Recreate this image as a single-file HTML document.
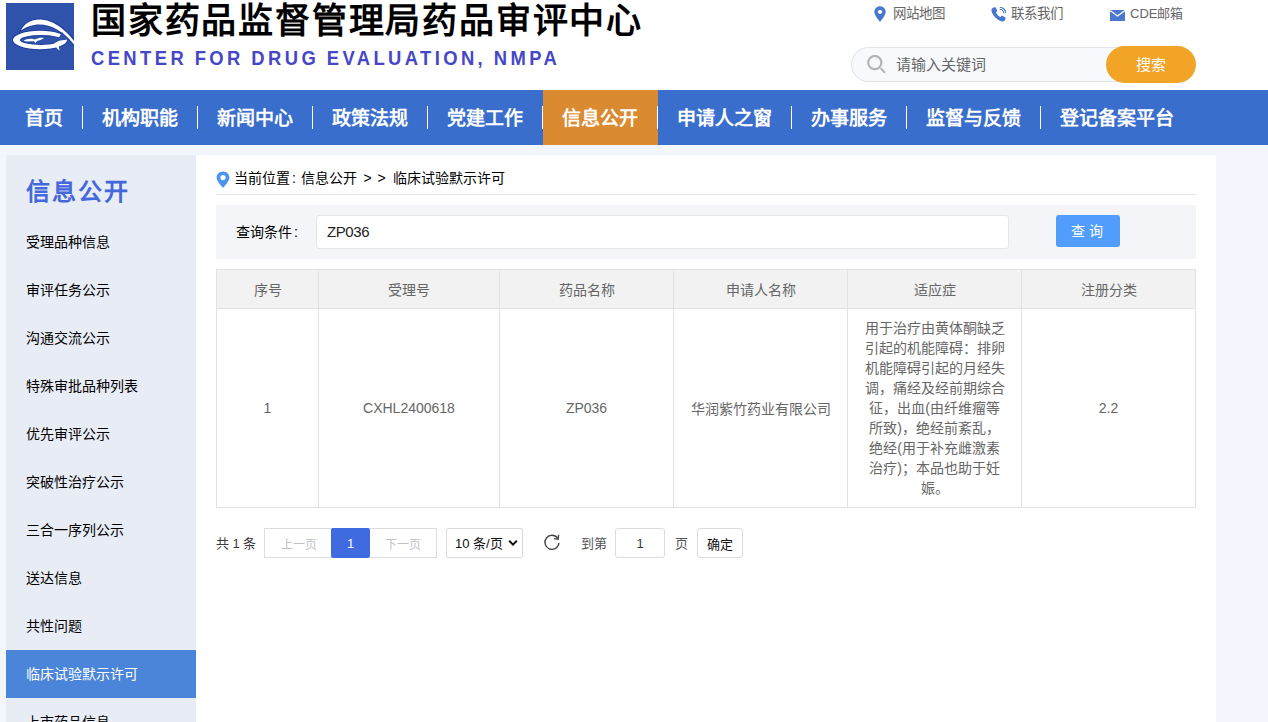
<!DOCTYPE html>
<html lang="zh-CN"><head><meta charset="utf-8">
<style>
*{margin:0;padding:0;box-sizing:border-box}
html,body{width:1268px;height:722px;overflow:hidden}
body{font-family:"Liberation Sans",sans-serif;background:#f3f6fd;position:relative;color:#333}
.abs{position:absolute}
#header{position:absolute;left:0;top:0;width:1268px;height:90px;background:#fff}
#logo{left:6px;top:3px;width:68px;height:67px;background:#2d4fa8}
#title{left:91px;top:0px;font-size:35px;font-weight:bold;color:#000;white-space:nowrap;line-height:42px;letter-spacing:1.8px}
#entitle{left:91px;top:45px;font-size:20px;font-weight:bold;color:#4646c8;letter-spacing:3.7px;word-spacing:-1px;transform:scaleX(0.92);transform-origin:0 0;white-space:nowrap;line-height:26px}
.toplink{top:5px;font-size:13px;color:#666;white-space:nowrap;line-height:18px}
#search{left:851px;top:47px;width:300px;height:35px;border:1px solid #e2e4ea;border-right:none;border-radius:18px 0 0 18px;background:#f8f9fd}
#search .ph{position:absolute;left:44px;top:7px;font-size:15px;color:#666;line-height:20px}
#sbtn{left:1106px;top:46px;width:90px;height:37px;border-radius:19px;background:#f2a426;color:#fff;font-size:15px;text-align:center;line-height:38px}
#nav{left:0;top:90px;width:1268px;height:55px;background:#3a6ecd}
.ni{position:absolute;top:0;height:55px;line-height:57px;font-size:19px;font-weight:bold;color:#fff;white-space:nowrap}
.sep{position:absolute;top:16px;width:1px;height:23px;background:#fff}
#active{left:543px;top:0;width:115px;height:55px;background:#da8a30}
#side{left:6px;top:155px;width:190px;height:567px;background:#e8ecf5}
#side .t{position:absolute;left:20px;top:21px;font-size:24px;font-weight:bold;color:#4468dc;line-height:32px;letter-spacing:2px}
.mi{position:absolute;left:0;width:190px;height:48px;line-height:48px;padding-left:20px;font-size:14px;color:#000;white-space:nowrap}
.mi.on{background:#4a85d9;color:#fff}
#main{left:196px;top:155px;width:1020px;height:567px;background:#fff}

#crumb,.crumb{left:20px;top:14px;font-size:14px;color:#000;white-space:nowrap;line-height:18px}
#pin{left:20px;top:16px}
#divl{left:20px;top:39px;width:980px;height:1px;background:#e6e6e6}
#qbar{left:20px;top:50px;width:980px;height:54px;background:#f3f5f9}
#qlabel{left:20px;top:17px;font-size:14px;color:#000;line-height:20px}
#qinput{left:100px;top:10px;width:693px;height:34px;background:#fff;border:1px solid #e3e6eb;border-radius:3px}
#qinput span{position:absolute;left:10px;top:6px;font-size:15px;color:#222;line-height:20px;letter-spacing:-0.4px}
#qbtn{left:840px;top:10px;width:64px;height:32px;background:#509dfb;border-radius:3px;color:#fff;font-size:14px;text-align:center;line-height:32px;letter-spacing:4px;text-indent:2px}
#tbl{position:absolute;left:20px;top:114px;border-collapse:collapse;font-size:14px;color:#666}
#tbl td,#tbl th{border:1px solid #e2e2e2;text-align:center;font-weight:normal}
#tbl th{background:#f2f2f2;height:39px;color:#666}
#tbl td{height:199px}
.pg{position:absolute;top:373px;height:30px;font-size:13px;line-height:31px;white-space:nowrap}
</style></head><body>
<div id="header">
  <svg id="logo" class="abs" width="68" height="67" viewBox="0 0 68 67" style="overflow:visible">
  <defs><clipPath id="lc"><rect width="68" height="67"/></clipPath></defs>
  <rect width="68" height="67" fill="#2f52aa"/>
  <g clip-path="url(#lc)" fill="#1d3c9c" stroke="#1d3c9c" stroke-width="2.2" opacity="0.75">
    <path d="M15,27.5 C22,12 50,9 73,45 L70.5,44.5 C50,17 28,18 15,27.5 Z"/>
    <path fill-rule="evenodd" d="M34,27.8 A27,9.2 0 1 0 34,46.2 A27,9.2 0 1 0 34,27.8 Z M35,32.1 A21,4.9 0 1 1 35,41.9 A21,4.9 0 1 1 35,32.1 Z"/>
  </g>
  <path d="M15,27.5 C22,12 50,9 73,45 L70.5,44.5 C50,17 28,18 15,27.5 Z" fill="#fff"/>
  <path d="M69,40 L76,47 L73,45 Z" fill="#dfe6f5"/>
  <path fill-rule="evenodd" d="M34,27.8 A27,9.2 0 1 0 34,46.2 A27,9.2 0 1 0 34,27.8 Z M35,32.1 A21,4.9 0 1 1 35,41.9 A21,4.9 0 1 1 35,32.1 Z" fill="#fff"/>
  <path d="M56,29 L62,36 L50,40 Z" fill="#2f52aa"/>
  <path d="M48,40.5 C52,37.5 57,36.5 61.5,37 C57,38.5 54,40.5 52.5,43 C53,44.5 53.5,46 53.5,47.5 C51,46 49.5,43.5 48,40.5 Z" fill="#fff"/>
  <path d="M17.5,38 C20,35.5 26,35 29,36.5 C32,35 35,34.3 38,35 C36,36.5 33,37.5 31,38 L29.5,40 L28,38.3 C24,38.3 20,38.8 17.5,38 Z" fill="#fff"/>
</svg>
  <div id="title" class="abs">国家药品监督管理局药品审评中心</div>
  <div id="entitle" class="abs">CENTER FOR DRUG EVALUATION, NMPA</div>
  <div class="abs toplink" style="left:893px;font-size:13.5px">网站地图</div>
  <div class="abs toplink" style="left:1011px;font-size:13.5px">联系我们</div>
  <div class="abs toplink" style="left:1130px">CDE邮箱</div>
  <div id="search" class="abs"><span class="ph">请输入关键词</span></div>
  <div id="sbtn" class="abs">搜索</div>
  <svg class="abs" style="left:874px;top:6px" width="12" height="16" viewBox="0 0 12 16"><path d="M6 0.3C2.8 0.3 0.3 2.8 0.3 5.9C0.3 9.4 6 15.8 6 15.8S11.7 9.4 11.7 5.9C11.7 2.8 9.2 0.3 6 0.3Z" fill="#4a78d0"/><circle cx="6" cy="5.8" r="2.1" fill="#fff"/></svg>
  <svg class="abs" style="left:991px;top:7px" width="15" height="15" viewBox="0 0 15 15"><path d="M2.6 0.6L4.6 0.3L6.4 3.9L4.9 5.3C5.6 7.2 7.4 9.2 9.5 10.1L10.9 8.6L14.6 10.4L14.3 12.6C13.8 14.2 12.4 14.8 10.9 14.5C6.2 13.3 1.6 8.7 0.5 4.1C0.2 2.5 0.9 1.1 2.6 0.6Z" fill="#4a78d0"/><path d="M8.6 2.2A4.2 4.2 0 0 1 12.8 6.4" stroke="#4a78d0" stroke-width="1.1" fill="none"/><path d="M8.8 0.2A6.2 6.2 0 0 1 14.8 6.2" stroke="#4a78d0" stroke-width="1.1" fill="none"/></svg>
  <svg class="abs" style="left:1110px;top:10px" width="15" height="11" viewBox="0 0 15 11"><rect x="0" y="0" width="15" height="11" fill="#4a78d0"/><path d="M0 0.5L7.5 6L15 0.5" stroke="#fff" stroke-width="1.3" fill="none"/></svg>
  <svg class="abs" style="left:866px;top:55px" width="21" height="20" viewBox="0 0 21 20"><circle cx="8.8" cy="7.6" r="6.6" stroke="#b3b3b3" stroke-width="2.2" fill="none"/><path d="M14.6 13.2L19 17.8" stroke="#b3b3b3" stroke-width="2"/></svg>

</div>
<div id="nav" class="abs">
  <div id="active" class="abs"></div>
  <div class="ni" style="left:25px">首页</div>
  <div class="sep" style="left:82px"></div>
  <div class="ni" style="left:102px">机构职能</div>
  <div class="sep" style="left:197px"></div>
  <div class="ni" style="left:217px">新闻中心</div>
  <div class="sep" style="left:312px"></div>
  <div class="ni" style="left:332px">政策法规</div>
  <div class="sep" style="left:427px"></div>
  <div class="ni" style="left:447px">党建工作</div>
  <div class="sep" style="left:542px"></div>
  <div class="ni" style="left:562px">信息公开</div>
  <div class="sep" style="left:657px"></div>
  <div class="ni" style="left:677px">申请人之窗</div>
  <div class="sep" style="left:791px"></div>
  <div class="ni" style="left:811px">办事服务</div>
  <div class="sep" style="left:906px"></div>
  <div class="ni" style="left:926px">监督与反馈</div>
  <div class="sep" style="left:1040px"></div>
  <div class="ni" style="left:1060px">登记备案平台</div>
</div>
<div id="side" class="abs">
  <div class="t">信息公开</div>
  <div class="mi" style="top:63px">受理品种信息</div>
  <div class="mi" style="top:111px">审评任务公示</div>
  <div class="mi" style="top:159px">沟通交流公示</div>
  <div class="mi" style="top:207px">特殊审批品种列表</div>
  <div class="mi" style="top:255px">优先审评公示</div>
  <div class="mi" style="top:303px">突破性治疗公示</div>
  <div class="mi" style="top:351px">三合一序列公示</div>
  <div class="mi" style="top:399px">送达信息</div>
  <div class="mi" style="top:447px">共性问题</div>
  <div class="mi on" style="top:495px">临床试验默示许可</div>
  <div class="mi" style="top:543px">上市药品信息</div>
</div>
<div id="main" class="abs">
  <svg id="pin" class="abs" width="14" height="17" viewBox="0 0 14 17"><path d="M7 0.5C3.4 0.5 0.6 3.3 0.6 6.8C0.6 10.5 7 16.8 7 16.8S13.4 10.5 13.4 6.8C13.4 3.3 10.6 0.5 7 0.5Z" fill="#4a94f0"/><circle cx="7" cy="6.6" r="2.6" fill="#fff"/></svg>
  <div class="abs crumb" style="left:38px">当前位置</div><div class="abs crumb" style="left:96px">:</div><div class="abs crumb" style="left:105px">信息公开</div><div class="abs crumb" style="left:167.5px">&gt;</div><div class="abs crumb" style="left:181.5px">&gt;</div><div class="abs crumb" style="left:197px">临床试验默示许可</div>
  <div id="divl" class="abs"></div>
  <div id="qbar" class="abs">
    <div id="qlabel" class="abs">查询条件<span style="margin-left:2px">:</span></div>
    <div id="qinput" class="abs"><span>ZP036</span></div>
    <div id="qbtn" class="abs">查询</div>
  </div>
  <table id="tbl">
    <tr><th style="width:102px">序号</th><th style="width:181px">受理号</th><th style="width:174px">药品名称</th><th style="width:174px">申请人名称</th><th style="width:174px">适应症</th><th style="width:174px">注册分类</th></tr>
    <tr><td>1</td><td>CXHL2400618</td><td>ZP036</td><td>华润紫竹药业有限公司</td><td style="line-height:20px;white-space:nowrap">用于治疗由黄体酮缺乏<br>引起的机能障碍：排卵<br>机能障碍引起的月经失<br>调，痛经及经前期综合<br>征，出血(由纤维瘤等<br>所致)，绝经前紊乱，<br>绝经(用于补充雌激素<br>治疗)；本品也助于妊<br>娠。</td><td>2.2</td></tr>
  </table>
  <div class="pg" style="left:20px;color:#3a3a3a">共 1 条</div>
  <div class="pg" style="left:68px;width:68px;border:1px solid #dcdcdc;border-right:none;color:#c0c4cc;text-align:center;line-height:32px;font-size:12px">上一页</div>
  <div class="pg" style="left:135px;width:39px;background:#3f6ae0;color:#fff;text-align:center;border-radius:2px">1</div>
  <div class="pg" style="left:174px;width:67px;border:1px solid #dcdcdc;border-left:none;color:#c0c4cc;text-align:center;line-height:32px;font-size:12px">下一页</div>
  <div class="pg" style="left:250px;width:77px;border:1px solid #d9d9d9;border-radius:2px;color:#111;padding-left:8px;line-height:29px">10 条/页</div>
  <svg class="abs" style="left:312px;top:384px" width="10" height="8" viewBox="0 0 10 8"><path d="M1.2 1.8L5 5.6L8.8 1.8" stroke="#111" stroke-width="2" fill="none"/></svg>
  <svg class="abs" style="left:347px;top:378px" width="18" height="18" viewBox="0 0 18 18"><path d="M14.6 5.2A7 7 0 1 0 15.9 10" stroke="#444" stroke-width="1.4" fill="none"/><path d="M15.6 1.8L15.2 6.2L10.9 5.6" stroke="#444" stroke-width="1.4" fill="none"/></svg>
  <div class="pg" style="left:385px;color:#555">到第</div>
  <div class="pg" style="left:419px;width:50px;border:1px solid #dcdcdc;border-radius:3px;color:#333;text-align:center;line-height:29px">1</div>
  <div class="pg" style="left:479px;color:#555">页</div>
  <div class="pg" style="left:501px;width:46px;border:1px solid #dcdcdc;border-radius:3px;color:#111;text-align:center;line-height:31px">确定</div>
</div>
</body></html>
